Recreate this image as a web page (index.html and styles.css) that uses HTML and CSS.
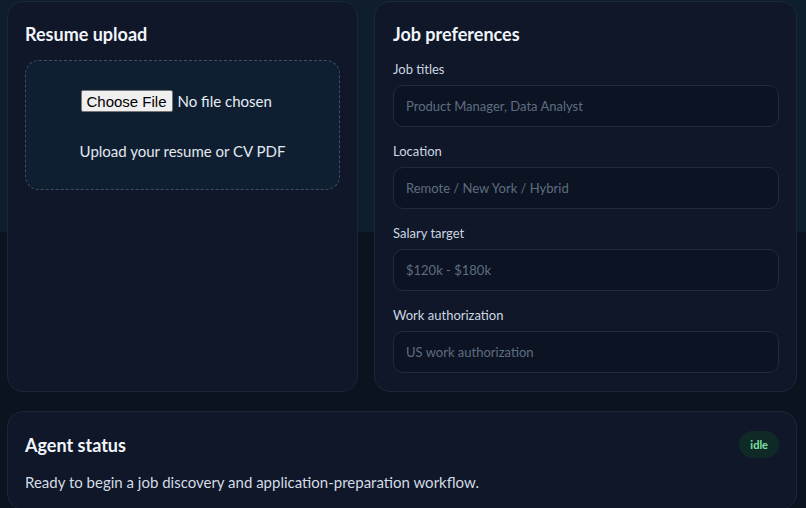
FILE: index.html
```html
<!DOCTYPE html>
<html lang="en">

<head>
    <meta charset="UTF-8" />
    <meta name="viewport" content="width=device-width, initial-scale=1" />
    <title>Job Agent</title>
    <link rel="stylesheet" href="styles.css">
</head>

<body>

    <div class="page">
        <!-- Top row -->
        <div class="top-grid">
            <section class="card">
                <h2>Resume upload</h2>
                <label class="dropzone">
                    <input type="file" class="file-input" accept="application/pdf" />
                    <span class="dropzone-hint">Upload your resume or CV PDF</span>
                </label>
            </section>

            <section class="card prefs-card">
                <h2>Job preferences</h2>
                <div class="field">
                    <label>Job titles</label>
                    <input type="text" placeholder="Product Manager, Data Analyst" />
                </div>
                <div class="field">
                    <label>Location</label>
                    <input type="text" placeholder="Remote / New York / Hybrid" />
                </div>
                <div class="field">
                    <label>Salary target</label>
                    <input type="text" placeholder="$120k - $180k" />
                </div>
                <div class="field">
                    <label>Work authorization</label>
                    <input type="text" placeholder="US work authorization" />
                </div>
            </section>
        </div>

        <!-- Status -->
        <section class="card status-card">
            <div class="status-head">
                <h2>Agent status</h2>
                <span class="badge">idle</span>
            </div>
            <p class="status-text">Ready to begin a job discovery and application-preparation workflow.</p>
        </section>
    </div>

</body>

</html>
```

FILE: styles.css
```css
* {
    margin: 0;
    padding: 0;
    box-sizing: border-box;
    font-family: 'Segoe UI', Lato, 'Open Sans', sans-serif;
}

body {
    background-color: #0a1420;
    background-image: linear-gradient(#0e1e2c, #0e1e2c);
    background-repeat: no-repeat;
    background-size: 100% 232px;
    color: #e6edf5;
}

.page {
    padding: 1px 9px 0 7px;
}

.top-grid {
    display: grid;
    grid-template-columns: 351px 1fr;
    gap: 16px;
    margin-bottom: 19px;
}

/* Card */
.card {
    background-color: #0f1729;
    border: 1px solid #1a2738;
    border-radius: 16px;
    padding: 20px 17px 18px;
}

.prefs-card {
    padding-left: 18px;
}

.card h2 {
    font-size: 18px;
    font-weight: bold;
    color: #f1f5fa;
    line-height: 24px;
    margin-bottom: 14px;
}

/* Resume upload */
.dropzone {
    display: flex;
    flex-direction: column;
    align-items: center;
    gap: 29px;
    padding: 29px 16px 28px;
    border: 1px dashed #3b4f66;
    border-radius: 14px;
    background-color: #0f1f31;
    cursor: pointer;
}

.file-input {
    font-size: 15px;
    color: #e6edf5;
    padding-left: 92px;
    height: 22px;
}

.file-input::file-selector-button {
    font-family: 'Liberation Sans', Arial, sans-serif;
    font-size: 15px;
    height: 22px;
    padding: 0 5px;
    margin-right: 5px;
    background-color: #efefef;
    border: 1px solid #767676;
    border-radius: 2px;
    color: #000;
}

.dropzone-hint {
    font-size: 15px;
    line-height: 20px;
    color: #e2e8f0;
}

/* Preferences */
.field {
    margin-bottom: 15px;
}

.field:last-child {
    margin-bottom: 0;
}

.field label {
    display: block;
    font-size: 13px;
    color: #cdd6e0;
    line-height: 18px;
    margin-bottom: 7px;
}

.field input {
    width: 100%;
    height: 42px;
    padding: 0 12px;
    background-color: #0c1424;
    border: 1px solid #1f2c3f;
    border-radius: 10px;
    font-size: 13px;
    color: #e6edf5;
}

.field input::placeholder {
    color: #5f6d80;
}

.field input:focus {
    outline: none;
    border-color: #2f6f5a;
}

/* Status */
.status-card {
    padding-top: 19px;
}

.status-head {
    display: flex;
    justify-content: space-between;
    align-items: center;
    margin-bottom: 15px;
}

.status-head h2 {
    margin-bottom: 0;
}

.badge {
    background-color: #0f2a26;
    color: #7ee2a8;
    font-size: 11px;
    font-weight: bold;
    padding: 6px 11px;
    border-radius: 14px;
    line-height: 15px;
}

.status-text {
    font-size: 15px;
    color: #d3dbe4;
}
```
